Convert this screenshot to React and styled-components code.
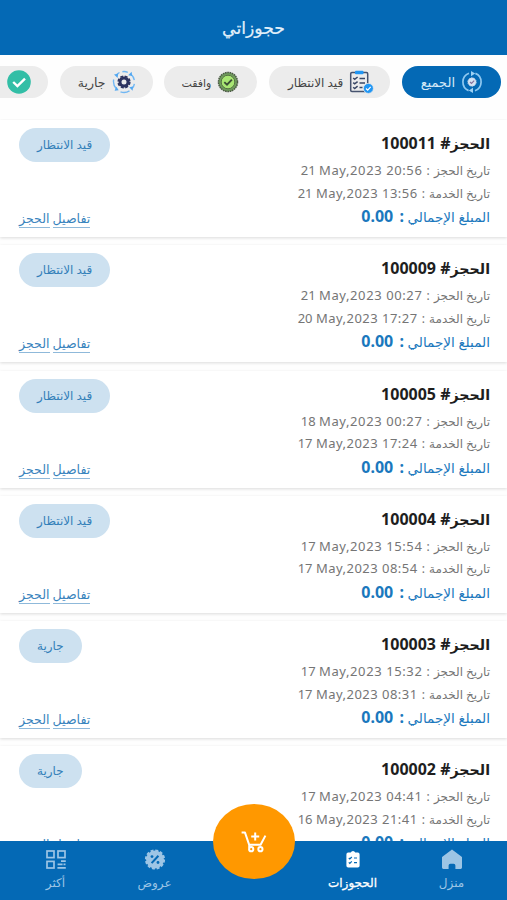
import React from "react";
import styled, { createGlobalStyle, css } from "styled-components";

const bookings = [
  { id: "100011", booked: "21 May,2023 20:56", service: "21 May,2023 13:56", status: "قيد الانتظار" },
  { id: "100009", booked: "21 May,2023 00:27", service: "20 May,2023 17:27", status: "قيد الانتظار" },
  { id: "100005", booked: "18 May,2023 00:27", service: "17 May,2023 17:24", status: "قيد الانتظار" },
  { id: "100004", booked: "17 May,2023 15:54", service: "17 May,2023 08:54", status: "قيد الانتظار" },
  { id: "100003", booked: "17 May,2023 15:32", service: "17 May,2023 08:31", status: "جارية" },
  { id: "100002", booked: "17 May,2023 04:41", service: "16 May,2023 21:41", status: "جارية" },
];

const AllIcon = () => (
  <svg width="22" height="22" viewBox="0 0 22 22" fill="none">
    <g stroke="#8fc8f0" strokeWidth="1.7">
      <path d="M8 2.3A9.3 9.3 0 0 0 7.6 19.6" />
      <path d="M14 19.7A9.3 9.3 0 0 0 14.4 2.4" />
    </g>
    <path d="M10 0l4.2 2.6L10 5.2zM12 16.8V22l-4.2-2.6z" fill="#9ed2f5" />
    <circle cx="11" cy="11" r="4.2" fill="#d6e4f4" stroke="#b4c8e4" strokeDasharray="1.6 1" />
    <path d="M9 11l1.5 1.5 2.7-2.9" stroke="#86709c" strokeWidth="1.2" />
  </svg>
);

const PendingIcon = () => (
  <svg width="25" height="24" viewBox="0 0 25 24" fill="none">
    <rect x="1.7" y="2.5" width="17" height="19" rx="1.2" stroke="#46536f" strokeWidth="1.5" />
    <rect x="6" y="0.8" width="8.5" height="3.4" rx="1" fill="#2196f3" />
    <g stroke="#394766" strokeWidth="1.5">
      <path d="M4.2 8l1.5 1.3L8.6 7M4.2 12.6l1.5 1.3 2.9-2.3M4.2 17.2l1.5 1.3 2.9-2.3" />
      <path d="M10.5 8.5H16M10.5 13H16M10.5 17.4h3" />
    </g>
    <circle cx="19.4" cy="18.4" r="5" fill="#2196f3" stroke="#ececec" strokeWidth="0.8" />
    <path d="M17 18.5l1.7 1.6 3-3.2" stroke="#fff" strokeWidth="1.2" />
  </svg>
);

const AcceptedIcon = () => (
  <svg width="22" height="22" viewBox="0 0 22 22" fill="none">
    <circle cx="11" cy="11" r="9.5" fill="#6f9d5c" stroke="#4c5b45" strokeWidth="1.5" strokeDasharray="1.7 0.6" />
    <circle cx="11" cy="11" r="6.8" fill="#a8e673" stroke="#50683f" strokeWidth="0.9" />
    <path d="M7.3 11.1l2.7 2.5 4.9-5" stroke="#3b4e36" strokeWidth="1.9" />
  </svg>
);

const OngoingIcon = () => (
  <svg width="24" height="24" viewBox="0 0 24 24" fill="none">
    <g stroke="#71b7f3" strokeWidth="1.4">
      <path d="M7.5 2.5A10.4 10.4 0 0 0 4 5.4M1.7 9.5a10.4 10.4 0 0 0 2.5 9" />
      <path d="M8.5 21.8a10.4 10.4 0 0 0 9-1M20.2 18.4a10.4 10.4 0 0 0 2.2-4.6" />
      <path d="M22.3 10.2A10.4 10.4 0 0 0 19 4.3M15.8 2.3a10.4 10.4 0 0 0-5.4-.6" />
    </g>
    <path d="M2 4.4l4.2-.6-.6 4.2zM4.4 16.8l2.3 3.5-4.1.5zM19.6 1.8l.6 4.3-4-.9zM17.2 17.2l3.8-.6-.4 4.2z" fill="#52a7f1" />
    <circle cx="12" cy="12" r="4" stroke="#2d3460" strokeWidth="3" />
    <circle cx="12" cy="12" r="5.8" stroke="#2d3460" strokeWidth="1.6" strokeDasharray="3 1.56" />
  </svg>
);

const DoneIcon = () => (
  <svg width="24" height="24" viewBox="0 0 24 24" fill="none">
    <circle cx="12" cy="12" r="11.8" fill="#32bea6" />
    <path d="M6.2 12l4.2 4 7.6-7.4" stroke="#fff" strokeWidth="2.4" />
  </svg>
);

const CartIcon = () => (
  <svg width="26" height="22" viewBox="0 0 26 22" fill="none" stroke="#fff" strokeWidth="2">
    <path d="M.6 1.6h3.4l4.2 12.2h11.4L24.4 4.6" strokeLinejoin="round" />
    <path d="M8.6 13.8l-.6 3" />
    <circle cx="10.2" cy="18.2" r="2.1" />
    <circle cx="19.4" cy="18.2" r="2.1" />
    <path d="M14.2 1.6v8M10.2 5.6h8" />
  </svg>
);

const HomeIcon = () => (
  <svg width="22" height="21" viewBox="0 0 22 21">
    <path
      d="M11 .6L21 8V18.6a1.4 1.4 0 0 1-1.4 1.4h-5.2v-3.4a1.8 1.8 0 0 0-1.8-1.8H9.4a1.8 1.8 0 0 0-1.8 1.8V20H2.4A1.4 1.4 0 0 1 1 18.6V8z"
      fill="currentColor"
    />
  </svg>
);

const BookingsIcon = () => (
  <svg width="14" height="17" viewBox="0 0 14 17" fill="none">
    <path
      d="M2.2 1.6h2.6a2.3 2.3 0 0 1 4.4 0h2.6A1.8 1.8 0 0 1 13.6 3.4v11.4a1.8 1.8 0 0 1-1.8 1.8H2.2a1.8 1.8 0 0 1-1.8-1.8V3.4a1.8 1.8 0 0 1 1.8-1.8z"
      fill="currentColor"
    />
    <path d="M2.8 7l1 1 2-2M2.8 11.4l1 1 2-2M8 7h3M8 11.6h3" stroke="#0469b5" strokeWidth="1.2" />
  </svg>
);

const OffersIcon = () => (
  <svg width="22" height="21" viewBox="0 0 22 21" fill="none">
    <circle cx="11" cy="10.5" r="9" fill="currentColor" />
    <circle cx="11" cy="10.5" r="8.9" stroke="currentColor" strokeWidth="2.4" strokeDasharray="2.9 1.76" />
    <path d="M7.6 14.1l6.8-7.4" stroke="#0469b5" strokeWidth="2" />
    <circle cx="8" cy="7.6" r="1.4" fill="#0469b5" />
    <circle cx="14" cy="13.5" r="1.4" fill="#0469b5" />
  </svg>
);

const MoreIcon = () => (
  <svg width="20" height="19" viewBox="0 0 20 19" fill="none" stroke="currentColor" strokeWidth="1.7">
    <rect x="1" y="1" width="7" height="6.6" />
    <rect x="12" y="1" width="7" height="6.6" />
    <rect x="1" y="11.4" width="7" height="6.6" />
    <path d="M15 11.2h4.8M11.6 14.4h5M17.5 14.4h2M11.4 17.9h8.4" />
  </svg>
);

const filters = [
  { id: "all", label: "الجميع", icon: <AllIcon />, width: 99, size: 13, inset: 18, active: true },
  { id: "pending", label: "قيد الانتظار", icon: <PendingIcon />, width: 121, size: 12, inset: 16 },
  { id: "accepted", label: "وافقت", icon: <AcceptedIcon />, width: 93, size: 11, inset: 18 },
  { id: "ongoing", label: "جارية", icon: <OngoingIcon />, width: 93, size: 12.5, inset: 17 },
  { id: "done", icon: <DoneIcon />, width: 93, size: 12, inset: 17 },
];

const App = () => {
  return (
    <>
      <GlobalStyle />
      <Screen>
        <Header>
          <h1>حجوزاتي</h1>
        </Header>
        <Filters>
          {filters.map((filter) => (
            <Chip
              key={filter.id}
              $active={filter.active}
              $width={filter.width}
              $size={filter.size}
              $inset={filter.inset}
            >
              {filter.icon}
              {filter.label && <span>{filter.label}</span>}
            </Chip>
          ))}
        </Filters>
        <List>
          {bookings.map((booking) => (
            <Card key={booking.id}>
              <Info>
                <Title>
                  الحجز<b># {booking.id}</b>
                </Title>
                <DateLine $spacing={0.6}>
                  تاريخ الحجز <i>:</i> <bdi dir="ltr">{booking.booked}</bdi>
                </DateLine>
                <DateLine $spacing={0.48}>
                  تاريخ الخدمة <i>:</i> <bdi dir="ltr">{booking.service}</bdi>
                </DateLine>
                <Total>
                  المبلغ الإجمالي <b>: 0.00</b>
                </Total>
              </Info>
              <Side>
                <Status>{booking.status}</Status>
                <Details href="#">
                  <span>تفاصيل</span> <span>الحجز</span>
                </Details>
              </Side>
            </Card>
          ))}
        </List>
        <Nav>
          <NavItem>
            <HomeIcon />
            <span>منزل</span>
          </NavItem>
          <NavItem $active>
            <BookingsIcon />
            <span>الحجوزات</span>
          </NavItem>
          <NavItem as="div" />
          <NavItem>
            <OffersIcon />
            <span>عروض</span>
          </NavItem>
          <NavItem>
            <MoreIcon />
            <span>أكثر</span>
          </NavItem>
          <CartButton>
            <CartIcon />
          </CartButton>
        </Nav>
      </Screen>
    </>
  );
};

export default App;

const GlobalStyle = createGlobalStyle`
  * {
    box-sizing: border-box;
    margin: 0;
    padding: 0;
  }
  body {
    background-color: #fefefe;
    font-family: "Noto Sans", "DejaVu Sans", sans-serif;
    overflow: hidden;
  }
  button {
    border: none;
    background: none;
    font-family: inherit;
  }
`;

const Screen = styled.div`
  direction: rtl;
  width: 507px;
  height: 900px;
  overflow: hidden;
  display: flex;
  flex-direction: column;
`;

const Header = styled.header`
  flex: none;
  height: 55px;
  background-color: #0469b5;
  display: flex;
  justify-content: center;
  h1 {
    color: #e3f0fa;
    font-size: 17.2px;
    font-weight: 400;
    line-height: 24px;
    padding-top: 16px;
    -webkit-text-stroke: 0.2px;
  }
`;

const Filters = styled.div`
  flex: none;
  display: flex;
  gap: 11.8px;
  height: 64px;
  padding: 11px 6px 0;
  overflow: hidden;
`;

const Chip = styled.button`
  flex: none;
  width: ${({ $width }) => $width}px;
  height: 32px;
  border-radius: 16px;
  display: flex;
  align-items: center;
  justify-content: flex-start;
  gap: 6px;
  padding-right: ${({ $inset }) => $inset}px;
  background-color: #ececec;
  color: #444;
  font-size: ${({ $size }) => $size}px;
  white-space: nowrap;
  svg {
    flex: none;
  }
  ${({ $active }) =>
    $active &&
    css`
      background-color: #0469b5;
      color: #d5e8f7;
    `}
`;

const List = styled.main`
  flex: 1;
  min-height: 0;
  overflow: hidden;
  padding-top: 1px;
  display: flex;
  flex-direction: column;
  gap: 8.3px;
`;

const Card = styled.article`
  flex: none;
  height: 117px;
  padding: 8px 17px 0 19px;
  display: flex;
  justify-content: space-between;
  background-color: #fff;
  box-shadow: 0 1px 3px rgba(0, 0, 0, 0.14);
`;

const Info = styled.div`
  white-space: nowrap;
`;

const Title = styled.h2`
  font-size: 14.2px;
  font-weight: 700;
  line-height: 31px;
  height: 31px;
  color: #1e1e1e;
  b {
    font-size: 16px;
    font-weight: 700;
    letter-spacing: 0.2px;
  }
`;

const DateLine = styled.p`
  height: 22.5px;
  line-height: 22.5px;
  font-size: 12px;
  color: #757575;
  i {
    font-style: normal;
    margin: 0 1px;
  }
  bdi {
    font-size: 13px;
    letter-spacing: ${({ $spacing }) => $spacing}px;
  }
`;

const Total = styled.p`
  line-height: 24px;
  font-size: 13.6px;
  color: #1a78bd;
  b {
    font-size: 16px;
    font-weight: 700;
    word-spacing: 2px;
  }
`;

const Side = styled.div`
  display: flex;
  flex-direction: column;
  align-items: flex-end;
  justify-content: space-between;
  padding-bottom: 9px;
`;

const Status = styled.span`
  height: 34px;
  line-height: 34px;
  padding: 0 18px;
  border-radius: 17px;
  background-color: #cde1f0;
  color: #337fb9;
  font-size: 12px;
`;

const Details = styled.a`
  color: #3984bd;
  font-size: 12.6px;
  line-height: 17px;
  text-decoration: none;
  display: flex;
  gap: 3px;
  span {
    border-bottom: 1px solid #8fb9da;
  }
`;

const Nav = styled.nav`
  position: relative;
  flex: none;
  height: 59px;
  padding: 0 6px;
  background-color: #0469b5;
  display: grid;
  grid-template-columns: repeat(5, 1fr);
`;

const NavItem = styled.button`
  display: flex;
  flex-direction: column;
  align-items: center;
  padding-top: 8px;
  color: ${({ $active }) => ($active ? "#fff" : "#9dc5e5")};
  font-size: 12px;
  svg {
    height: 21px;
  }
  span {
    line-height: 22px;
    padding-top: 2px;
    -webkit-text-stroke: ${({ $active }) => ($active ? "0.3px" : "0")};
  }
`;

const CartButton = styled.button`
  position: absolute;
  top: -37px;
  left: 213px;
  width: 82px;
  height: 75px;
  border-radius: 50%;
  background-color: #ff9800;
  display: flex;
  align-items: center;
  justify-content: center;
`;
